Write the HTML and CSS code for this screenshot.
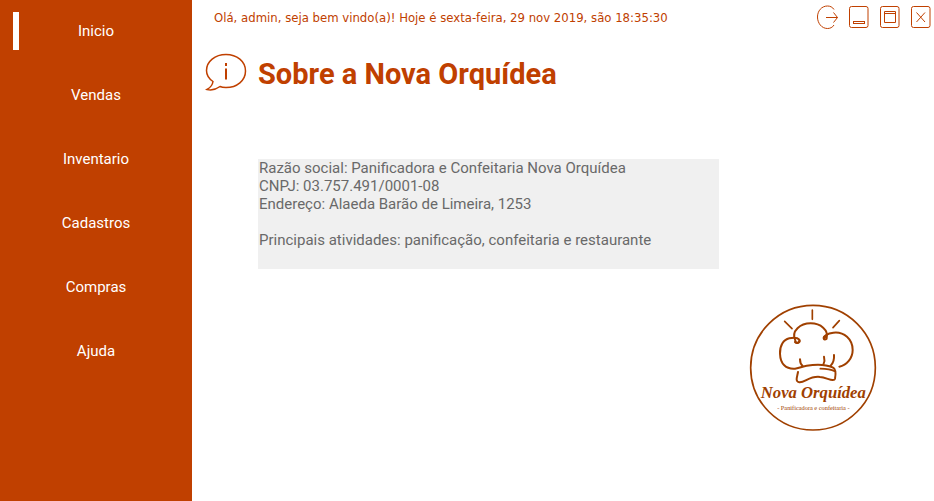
FILE: index.html
```html
<!DOCTYPE html>
<html lang="pt-BR">
<head>
<meta charset="utf-8">
<meta name="viewport" content="width=device-width, initial-scale=1">
<title>Nova Orquídea</title>
<link rel="stylesheet" href="styles.css">
</head>
<body>
<div class="app">
  <nav class="sidebar" aria-label="Menu">
    <a class="nav-link active" href="#">Inicio</a>
    <a class="nav-link" href="#">Vendas</a>
    <a class="nav-link" href="#">Inventario</a>
    <a class="nav-link" href="#">Cadastros</a>
    <a class="nav-link" href="#">Compras</a>
    <a class="nav-link" href="#">Ajuda</a>
  </nav>
  <div class="content">
    <header class="topbar">
      <p class="greeting">Olá, admin, seja bem vindo(a)! Hoje é sexta-feira, 29 nov 2019, são 18:35:30</p>
      <div class="controls">
        <button type="button" aria-label="Sair">
          <svg width="22" height="24" viewBox="0 0 22 24"><path d="M18 4.500C16.500 2 14 1 11.500 1C5.500 1 1.500 6 1.500 12S5.500 23.500 11.500 23.500C14 23.500 16.500 22.500 18 20M10 12.500H21.500M17.500 7.500L21.500 12.500L17.500 17.500"/></svg>
        </button>
        <button type="button" aria-label="Minimizar">
          <svg width="20" height="24" viewBox="0 0 20 24"><rect x=".5" y="1.500" width="18.500" height="21" rx="2"/><rect x="4.500" y="16.500" width="11" height="2"/></svg>
        </button>
        <button type="button" aria-label="Maximizar">
          <svg width="20" height="24" viewBox="0 0 20 24"><rect x=".5" y="1.500" width="18.500" height="21" rx="2"/><path d="M4.500 6.500H15.500V17.500H4.500ZM4.500 8.500H15.500"/></svg>
        </button>
        <button type="button" aria-label="Fechar">
          <svg width="20" height="24" viewBox="0 0 20 24"><rect x=".5" y="1.500" width="18.500" height="21" rx="2"/><path d="M5.500 7.500L14 17M14 7.500L5.500 17"/></svg>
        </button>
      </div>
    </header>
    <main class="main">
      <div class="heading">
        <svg class="info" width="42" height="40" viewBox="0 0 42 40" aria-hidden="true"><path d="M8 28.500C3.500 25.500 1.500 21.500 1.500 17.500C1.500 8.500 10 1.500 21 1.500S40.500 8.500 40.500 18S32 34.500 21 34.500C18.500 34.500 16.500 34.200 15 33.500C11 36.500 6 37.500 2 36.500C5.500 34.500 7.500 32 8 28.500Z"/><path class="info-i" d="M21 15.500V26.500M21 10V13"/></svg>
        <h1>Sobre a Nova Orquídea</h1>
      </div>
      <section class="about">
        <p>Razão social: Panificadora e Confeitaria Nova Orquídea</p>
        <p>CNPJ: 03.757.491/0001-08</p>
        <p>Endereço: Alaeda Barão de Limeira, 1253</p>
        <p class="activities">Principais atividades: panificação, confeitaria e restaurante</p>
      </section>
      <svg class="logo" width="146" height="144" viewBox="0 0 438 432" role="img" aria-label="Nova Orquídea, panificadora e confeitaria">
        <circle cx="219" cy="215" r="187"/>
        <g class="hat" transform="translate(90 12)">
          <path class="rays" d="M127 30V58M44 64L66 86M208 62L189 83"/>
          <path d="M88 122C88 130 76 130 76 122C62 92 92 70 122 70C152 70 176 90 170 114C168 121 160 120 161 113C162 106 169 111 170 116"/>
          <path d="M75 126C81 133 92 127 88 119C82 112 67 113 58 115C40 119 29 137 30 161C31 192 48 208 75 206C90 204 98 199 110 197C140 192 172 195 188 202C199 207 197 225 195 236C192 247 171 233 150 231C119 227 104 249 88 247C74 245 82 229 84 216"/>
          <path d="M163 117C159 107 174 100 190 98C222 94 248 118 248 150C248 175 230 196 208 200M90 178C90 188 93 194 98 198M162 170C165 180 163 188 160 194M192 165C193 178 190 189 182 197"/>
          <path class="rays" d="M151 206C165 206 180 206 194 214"/>
        </g>
        <text class="brand" x="220" y="306">Nova Orquídea</text>
        <text class="tagline" x="220" y="341">- Panificadora e confeitaria -</text>
      </svg>
    </main>
  </div>
</div>
</body>
</html>
```
FILE: styles.css
```css
* { box-sizing: border-box; }

body {
  margin: 0;
  background: #fff;
  color: #c04000;
  font-family: Roboto, "Liberation Sans", sans-serif;
}

h1, p { margin: 0; }

.app {
  display: flex;
  min-height: 100vh;
}

.sidebar {
  flex: 0 0 192px;
  display: flex;
  flex-direction: column;
  gap: 26px;
  padding-top: 12px;
  background: #c04000;
}

.nav-link {
  height: 38px;
  border: 0 solid #fff;
  margin: 0 13px;
  color: #fff;
  font-size: 15px;
  line-height: 38px;
  text-align: center;
  text-decoration: none;
}

.nav-link.active {
  border-left-width: 6px;
  padding-right: 6px;
}

.content {
  flex: 1;
  min-width: 0;
}

.topbar {
  display: flex;
  justify-content: space-between;
  align-items: flex-start;
  padding: 5px 3px 0 22px;
}

.greeting {
  padding-top: 5px;
  font-family: "DejaVu Sans Condensed", "DejaVu Sans", sans-serif;
  font-size: 13px;
  line-height: 16px;
}

.controls {
  display: flex;
  gap: 11px;
}

.controls button {
  display: block;
  padding: 0;
  border: 0;
  background: none;
}

svg {
  display: block;
  fill: none;
  stroke: #c04000;
}

.main {
  display: flex;
  flex-direction: column;
  padding: 24px 48px 0 13px;
}

.heading {
  display: flex;
  align-items: flex-start;
  gap: 11px;
}

.info { stroke-width: 1.5; }
.info-i { stroke-width: 2; }

h1 {
  font-size: 29px;
  line-height: 42px;
}

.about {
  width: 461px;
  max-width: 100%;
  min-height: 110px;
  margin: 64px 0 0 53px;
  padding-left: 1px;
  background: #f0f0f0;
  color: #696969;
  font-size: 15px;
  line-height: 18px;
}

.activities { margin-top: 18px; }

.logo {
  align-self: flex-end;
  margin-top: 27px;
  stroke: #a04000;
}

.logo circle { stroke-width: 5; }

.hat {
  stroke-width: 6;
  stroke-linecap: round;
  stroke-linejoin: round;
}

.rays { stroke-width: 5; }

.logo text {
  fill: #a04000;
  stroke: none;
  font-family: "Liberation Serif", serif;
  text-anchor: middle;
}

.brand {
  font-size: 50px;
  font-style: italic;
  font-weight: bold;
}

.tagline { font-size: 19px; }
```
